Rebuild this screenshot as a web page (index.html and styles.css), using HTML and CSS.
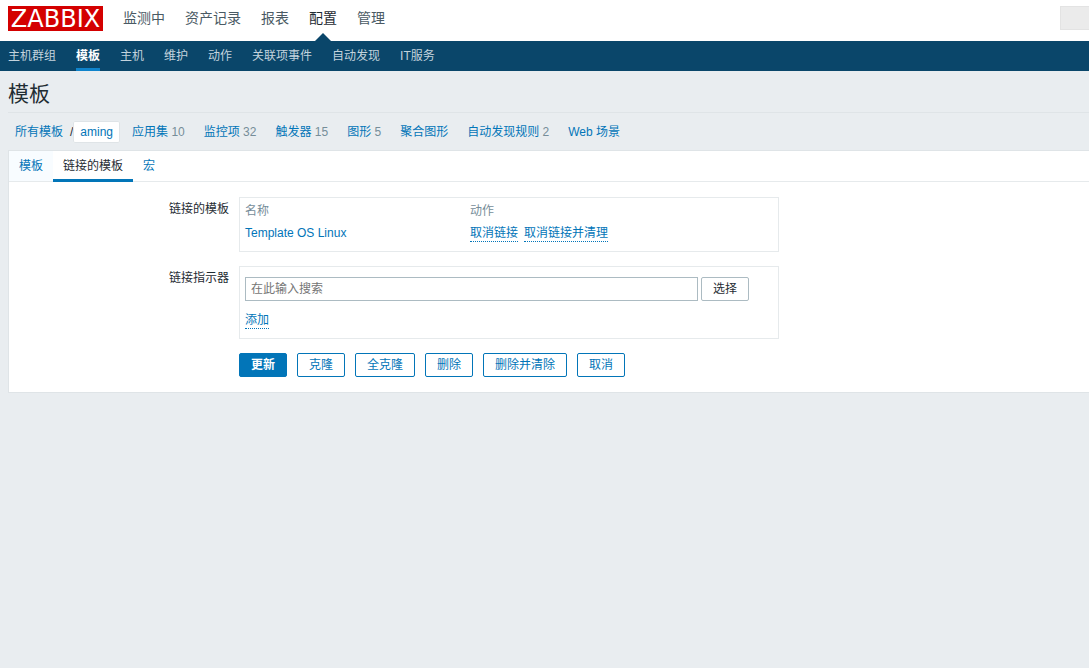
FILE: index.html
```html
<!DOCTYPE html>
<html lang="zh-CN">
<head>
<meta charset="utf-8">
<title>模板</title>
<link rel="stylesheet" href="styles.css">
</head>
<body>
<header class="top">
  <a class="logo" href="#">ZABBIX</a>
  <nav class="main-nav">
    <a href="#">监测中</a>
    <a href="#">资产记录</a>
    <a href="#">报表</a>
    <a class="current" href="#">配置</a>
    <a href="#">管理</a>
  </nav>
  <input class="global-search" type="text" aria-label="搜索">
</header>
<nav class="sub-nav">
  <a href="#">主机群组</a>
  <a class="current" href="#">模板</a>
  <a href="#">主机</a>
  <a href="#">维护</a>
  <a href="#">动作</a>
  <a href="#">关联项事件</a>
  <a href="#">自动发现</a>
  <a href="#">IT服务</a>
</nav>
<main>
  <h1>模板</h1>
  <nav class="object-nav">
    <div class="path"><a href="#">所有模板</a><span class="slash">/</span><a class="selected" href="#">aming</a></div>
    <span><a href="#">应用集</a> 10</span>
    <span><a href="#">监控项</a> 32</span>
    <span><a href="#">触发器</a> 15</span>
    <span><a href="#">图形</a> 5</span>
    <span><a href="#">聚合图形</a></span>
    <span><a href="#">自动发现规则</a> 2</span>
    <span><a href="#">Web 场景</a></span>
  </nav>
  <form class="panel">
    <nav class="tabs">
      <a class="hovered" href="#">模板</a>
      <a class="current" href="#">链接的模板</a>
      <a href="#">宏</a>
    </nav>
    <div class="form-grid">
      <span class="label">链接的模板</span>
      <div class="box linked">
        <table>
          <thead><tr><th>名称</th><th>动作</th></tr></thead>
          <tbody><tr><td><a href="#">Template OS Linux</a></td><td class="actions"><button class="link" type="button">取消链接</button><button class="link" type="button">取消链接并清理</button></td></tr></tbody>
        </table>
      </div>
      <label class="label" for="indicator">链接指示器</label>
      <div class="box indicator">
        <div class="picker">
          <input id="indicator" type="text" placeholder="在此输入搜索">
          <button class="btn grey" type="button">选择</button>
        </div>
        <button class="link" type="button">添加</button>
      </div>
      <div class="buttons">
        <button class="btn primary" type="button">更新</button>
        <button class="btn" type="button">克隆</button>
        <button class="btn" type="button">全克隆</button>
        <button class="btn" type="button">删除</button>
        <button class="btn" type="button">删除并清除</button>
        <button class="btn" type="button">取消</button>
      </div>
    </div>
  </form>
</main>
</body>
</html>
```
FILE: styles.css
```css
* { box-sizing: border-box; }

body {
  margin: 0;
  background: #e9edf0;
  color: #1f2c33;
  font: 12px/18px "Liberation Sans", "Noto Sans CJK SC", sans-serif;
}

a { color: #0275b8; text-decoration: none; }
button, input { font: inherit; }

.top {
  display: flex;
  align-items: flex-start;
  height: 41px;
  padding: 6px 0 0 8px;
  background: #fff;
}

.logo {
  width: 95px;
  height: 25px;
  background: #d40000;
  color: #fff;
  font: 24px/27px "DejaVu Sans", sans-serif;
  text-align: center;
}

.main-nav { display: flex; gap: 20px; margin-left: 20px; }
.main-nav a { height: 35px; color: #4a5a64; font-size: 14px; line-height: 24px; }
.main-nav .current { position: relative; color: #1f2c33; }
.main-nav .current::after {
  content: "";
  position: absolute;
  bottom: 0;
  left: 50%;
  margin-left: -8px;
  border: solid transparent;
  border-width: 0 8px 8px;
  border-bottom-color: #0a466a;
}

.global-search {
  width: 29px;
  height: 24px;
  margin-left: auto;
  padding: 0;
  border: 1px solid #e3e3e3;
  border-right: 0;
  background: #ebebeb;
}

.sub-nav {
  display: flex;
  gap: 20px;
  height: 30px;
  padding: 0 8px;
  background: #0a466a;
}
.sub-nav a { height: 30px; color: #c3d3dd; line-height: 30px; }
.sub-nav .current { border-bottom: 3px solid #0f83cb; color: #fff; font-weight: bold; }

main { padding-left: 8px; }

h1 {
  margin: 0;
  padding: 6px 0 2px;
  border-bottom: 1px solid #dfe4e7;
  font-size: 21px;
  font-weight: normal;
  line-height: 33px;
}

.object-nav {
  display: flex;
  align-items: center;
  gap: 19px;
  padding: 8px 6px 7px 7px;
  color: #768d99;
  line-height: 22px;
}
.path { display: flex; margin-right: -7px; color: #1f2c33; }
.slash { margin-left: 7px; }
.selected {
  padding: 0 7px;
  background: #fff;
  border-radius: 2px;
  box-shadow: inset 0 0 0 1px #dfe4e7;
}

.panel {
  background: #fff;
  border: 1px solid #dfe4e7;
  border-right: 0;
}

.tabs { display: flex; height: 31px; border-bottom: 1px solid #e6eaec; }
.tabs a { height: 31px; padding: 0 10px; line-height: 30px; }
.tabs .hovered { height: 30px; background: #f8fcff; }
.tabs .current { border-bottom: 3px solid #0275b8; color: #1f2c33; }

.form-grid {
  display: grid;
  grid-template-columns: 220px minmax(0, 540px);
  gap: 14px 10px;
  padding: 15px 0;
}
.label { padding-top: 3px; text-align: right; }
.box { padding: 5px; border: 1px solid #e6eaec; }

table { width: 100%; border-collapse: collapse; table-layout: fixed; }
th, td { height: 22px; padding: 0; text-align: left; vertical-align: top; }
td { height: 21px; line-height: 16px; }
th { width: 225px; color: #768d99; font-weight: normal; line-height: 16px; }
th:last-child { width: auto; }
.actions { font-size: 0; }

.link {
  padding: 0;
  border: 0;
  border-bottom: 1px dotted #0275b8;
  background: none;
  color: #0275b8;
  font-size: 12px;
  line-height: 16px;
}
.link + .link { margin-left: 6px; }

.indicator { padding: 10px 5px 9px; }
.picker { display: flex; gap: 3px; margin-bottom: 10px; }
.picker input {
  flex: 0 1 453px;
  min-width: 0;
  height: 24px;
  padding: 0 5px;
  border: 1px solid #acbbc2;
  color: #1f2c33;
}
.picker input::placeholder { color: #757575; }

.buttons { grid-column: 2; display: flex; flex-wrap: wrap; gap: 10px; }
.btn {
  height: 24px;
  padding: 0 11px;
  border: 1px solid #0275b8;
  border-radius: 2px;
  background: #fff;
  color: #0275b8;
  line-height: 22px;
}
.btn.grey { border-color: #acbbc2; color: #1f2c33; }
.btn.primary { background: #0275b8; color: #fff; font-weight: bold; }
```
